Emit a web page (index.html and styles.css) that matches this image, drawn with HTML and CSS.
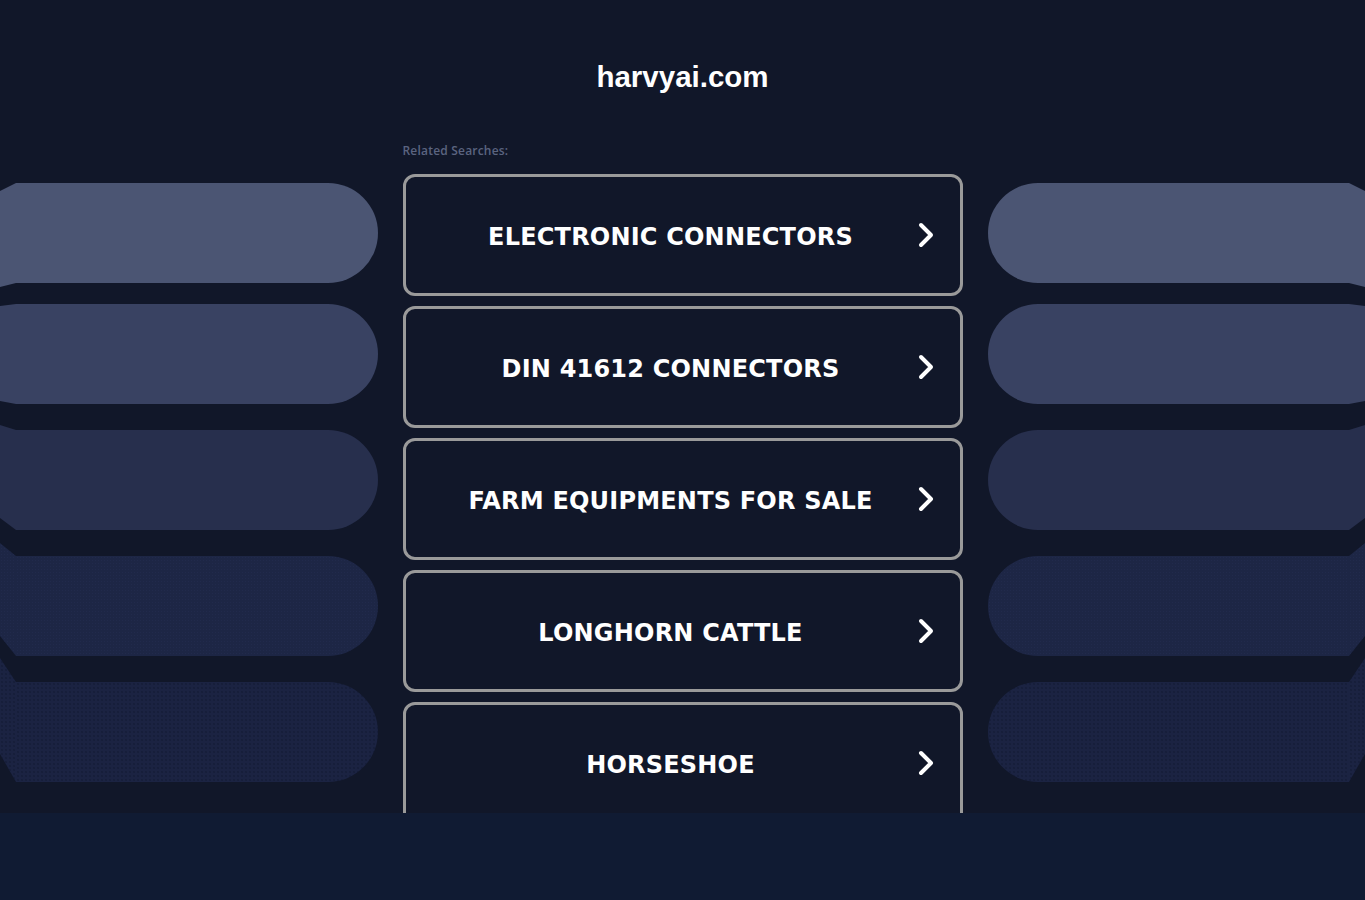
FILE: index.html
```html
<!DOCTYPE html>
<html lang="en">
<head>
  <meta charset="UTF-8">
  <meta name="viewport" content="width=device-width, initial-scale=1.0">
  <title>harvyai.com</title>
  <link rel="stylesheet" href="styles.css">
</head>
<body>
  <div class="stage">
    <aside class="bands bands-left">
      <div class="band band-1"><span class="band-cap"></span><span class="band-body"></span></div>
      <div class="band band-2"><span class="band-cap"></span><span class="band-body"></span></div>
      <div class="band band-3"><span class="band-cap"></span><span class="band-body"></span></div>
      <div class="band band-4"><span class="band-cap"></span><span class="band-body"></span></div>
      <div class="band band-5"><span class="band-cap"></span><span class="band-body"></span></div>
    </aside>

    <main class="center">
      <h1 class="domain">harvyai.com</h1>
      <p class="label">Related Searches:</p>

      <ul class="searches">
        <li>
          <a class="search-link" href="#">
            <span class="search-text">ELECTRONIC CONNECTORS</span>
            <svg class="chevron" viewBox="0 0 18 28" width="18" height="28"><path d="M4 4 L14 14 L4 24" /></svg>
          </a>
        </li>
        <li>
          <a class="search-link" href="#">
            <span class="search-text">DIN 41612 CONNECTORS</span>
            <svg class="chevron" viewBox="0 0 18 28" width="18" height="28"><path d="M4 4 L14 14 L4 24" /></svg>
          </a>
        </li>
        <li>
          <a class="search-link" href="#">
            <span class="search-text">FARM EQUIPMENTS FOR SALE</span>
            <svg class="chevron" viewBox="0 0 18 28" width="18" height="28"><path d="M4 4 L14 14 L4 24" /></svg>
          </a>
        </li>
        <li>
          <a class="search-link" href="#">
            <span class="search-text">LONGHORN CATTLE</span>
            <svg class="chevron" viewBox="0 0 18 28" width="18" height="28"><path d="M4 4 L14 14 L4 24" /></svg>
          </a>
        </li>
        <li>
          <a class="search-link" href="#">
            <span class="search-text">HORSESHOE</span>
            <svg class="chevron" viewBox="0 0 18 28" width="18" height="28"><path d="M4 4 L14 14 L4 24" /></svg>
          </a>
        </li>
      </ul>
    </main>

    <aside class="bands bands-right">
      <div class="band band-1"><span class="band-cap"></span><span class="band-body"></span></div>
      <div class="band band-2"><span class="band-cap"></span><span class="band-body"></span></div>
      <div class="band band-3"><span class="band-cap"></span><span class="band-body"></span></div>
      <div class="band band-4"><span class="band-cap"></span><span class="band-body"></span></div>
      <div class="band band-5"><span class="band-cap"></span><span class="band-body"></span></div>
    </aside>
  </div>

  <footer class="bottom"></footer>
</body>
</html>
```

FILE: styles.css
```css
:root {
  --bg: #111729;
  --bottom: #101b33;
  --border: #9a9a9a;
  --label: #5b6480;
}

* {
  box-sizing: border-box;
  margin: 0;
  padding: 0;
}

body {
  background: var(--bg);
  color: #fff;
  font-family: "Liberation Sans", Arial, sans-serif;
}

.stage {
  display: grid;
  grid-template-columns: 1fr 560px 1fr;
  column-gap: 25px;
  height: 813px;
  overflow: hidden;
}

/* decorative side bands */
.bands {
  display: flex;
  flex-direction: column;
  gap: 26px;
  padding-top: 183px;
}

.band {
  display: flex;
  align-items: center;
  height: 100px;
  --top: 0px;
  --bot: 100px;
}

.band-cap,
.band-body {
  background-color: var(--fill);
  background-image: var(--dots, none);
  background-size: var(--dot-size, 4px) var(--dot-size, 4px);
}

.band-body {
  flex: 1;
  height: 100px;
}

.band-cap {
  flex: 0 0 16px;
  height: 160px;
}

.bands-left .band-body {
  border-radius: 0 50px 50px 0;
}

.bands-left .band-cap {
  clip-path: polygon(0 calc(30px + var(--top)), 100% 30px, 100% 130px, 0 calc(30px + var(--bot)));
}

.bands-right .band-body {
  border-radius: 50px 0 0 50px;
}

.bands-right .band-cap {
  order: 2;
  clip-path: polygon(0 30px, 100% calc(30px + var(--top)), 100% calc(30px + var(--bot)), 0 130px);
}

.band-1 {
  --fill: #4b5573;
  --top: 8px;
  --bot: 104px;
  margin-bottom: -5px;
}

.band-2 {
  --fill: #394262;
  --top: 2px;
  --bot: 97px;
}

.band-3 {
  --fill: #272f4d;
  --top: -5px;
  --bot: 88px;
}

.band-4 {
  --fill: #1d2645;
  --top: -13px;
  --bot: 80px;
  --dots: radial-gradient(circle, rgba(50, 64, 105, 0.18) 0.6px, transparent 1px);
  --dot-size: 3px;
}

.band-5 {
  --fill: #1b2342;
  --top: -24px;
  --bot: 72px;
  --dots: radial-gradient(circle, rgba(8, 12, 28, 0.28) 0.6px, transparent 1px);
  --dot-size: 4px;
}

/* center column */
.center {
  padding-top: 59px;
}

.domain {
  font-size: 29.5px;
  line-height: 36px;
  font-weight: 700;
  text-align: center;
}

.label {
  margin-top: 48px;
  font-family: "Open Sans", sans-serif;
  font-size: 12px;
  font-weight: 600;
  letter-spacing: 0.2px;
  line-height: 16px;
  color: var(--label);
}

.searches {
  list-style: none;
  display: flex;
  flex-direction: column;
  gap: 10px;
  margin-top: 15px;
}

.search-link {
  position: relative;
  display: flex;
  align-items: center;
  justify-content: center;
  height: 122px;
  padding: 3px 24px 0 0;
  border: 3px solid var(--border);
  border-radius: 12px;
  color: #fff;
  text-decoration: none;
}

.search-text {
  font-family: "DejaVu Sans", Verdana, sans-serif;
  font-size: 24px;
  font-weight: 700;
  letter-spacing: 0.2px;
}

.chevron {
  position: absolute;
  right: 25px;
  top: 50%;
  margin-top: -14px;
  fill: none;
  stroke: #fff;
  stroke-width: 4;
  stroke-linecap: round;
  stroke-linejoin: round;
}

.bottom {
  height: 87px;
  background: var(--bottom);
}
```
